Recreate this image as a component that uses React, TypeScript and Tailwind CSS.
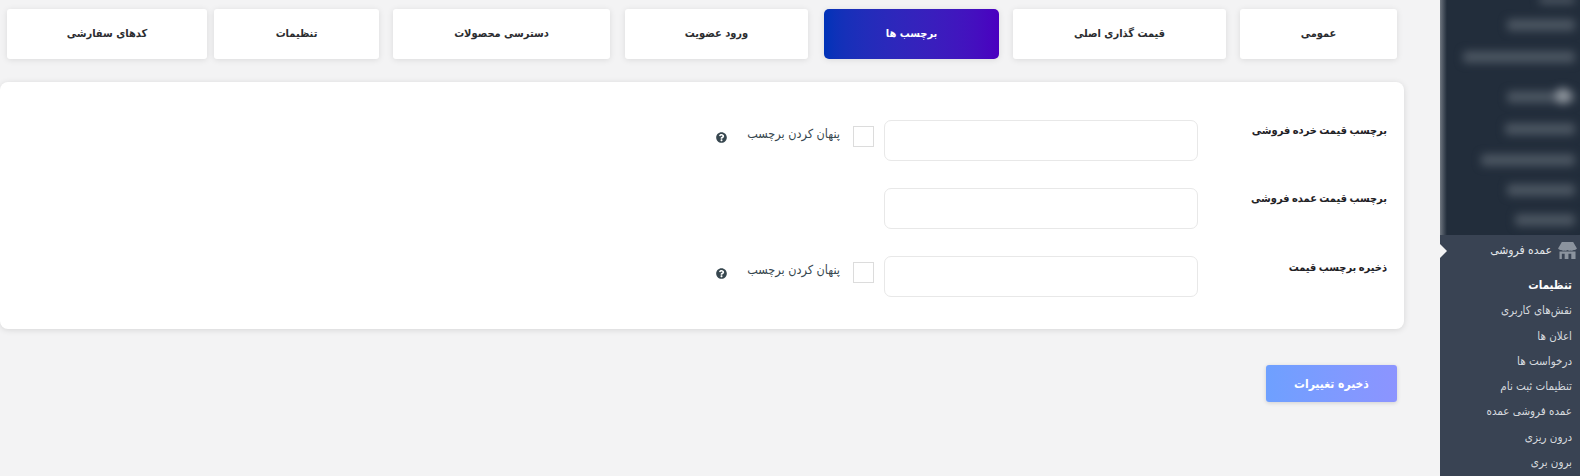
import React from 'react';
import { FaQuestionCircle } from 'react-icons/fa';

const tabs = [
  { label: 'عمومی', className: 'w-[157px] ml-[14px]' },
  { label: 'قیمت گذاری اصلی', className: 'w-[213px] ml-[14px]' },
  { label: 'برچسب ها', className: 'w-[175px] ml-[16px]', active: true },
  { label: 'ورود عضویت', className: 'w-[183px] ml-[15px]' },
  { label: 'دسترسی محصولات', className: 'w-[217px] ml-[14px]' },
  { label: 'تنظیمات', className: 'w-[165px] ml-[7px]' },
  { label: 'کدهای سفارشی', className: 'w-[200px]' },
];

const submenu = [
  { label: 'نقش‌های کاربری' },
  { label: 'اعلان ها' },
  { label: 'درخواست ها' },
  { label: 'تنظیمات ثبت نام' },
  { label: 'عمده فروشی عمده' },
  { label: 'درون ریزی' },
  { label: 'برون بری' },
];

// blurred menu entries at the top of the sidebar
const blurredRows = [
  { className: 'w-[36px] h-[8px] mt-[-4px]' },
  { className: 'w-[68px] h-[12px] mt-[15px]' },
  { className: 'w-[112px] h-[12px] mt-[20px]' },
  { className: 'w-[68px] h-[12px] mt-[28px]', spot: true },
  { className: 'w-[70px] h-[12px] mt-[20px]' },
  { className: 'w-[94px] h-[12px] mt-[19px]' },
  { className: 'w-[68px] h-[12px] mt-[18px]' },
  { className: 'w-[60px] h-[12px] mt-[18px]' },
];

const HideLabel = () => (
  <>
    <span className="mr-[10px] mt-[6px] box-border size-[21px] shrink-0 border border-[#dcdcdc] bg-white" />
    <span className="mr-[13px] mt-[4px] text-[12.500px] leading-[20px] text-[#37474f]">پنهان کردن برچسب</span>
    <FaQuestionCircle className="mr-[20px] mt-[12px] size-[11px] text-[#37474f]" />
  </>
);

const FieldRow = ({ label, hide, labelClass }: { label: string; hide?: boolean; labelClass: string }) => (
  <div className="flex items-start">
    <label className={`w-[189px] shrink-0 text-[11px] font-bold leading-[20px] text-[#1f2226] [word-spacing:-1px] ${labelClass}`}>{label}</label>
    <div className="box-border h-[41px] w-[314px] shrink-0 rounded-[7px] border border-[#e8e8e8] bg-white" />
    {hide && <HideLabel />}
  </div>
);

const Sidebar = () => (
  <aside className="flex h-[476px] w-[140px] shrink-0 flex-col overflow-hidden bg-[#394353] text-[#e4e7ea]">
    <div className="flex h-[235px] shrink-0 flex-row-reverse bg-[#222d3b]">
      <div className="h-full w-[7px] shrink-0 bg-linear-to-r from-[#6f7680] to-[#222d3b]" />
      <div className="flex flex-1 flex-col items-start pr-[5px] blur-[4px]">
        {blurredRows.map((row, i) => (
          <div key={i} className={`rounded-sm bg-[#4b5561] ${row.className}`}>
            {row.spot && <div className="mr-[4px] mt-[-3px] size-[16px] rounded-full bg-[#8b929a]" />}
          </div>
        ))}
      </div>
    </div>
    <div className="relative flex h-[34px] shrink-0 items-center pr-[3px] pb-[4px]">
      <span className="absolute right-[140px] top-[9px] size-0 translate-x-[7px] border-y-[7px] border-r-0 border-l-[7px] border-y-transparent border-l-[#f3f3f4]" />
      <svg viewBox="0 0 20 18" className="ml-[6px] h-[17px] w-[19px] shrink-0 fill-[#8b939e]">
        <path d="M4 0h12l4 7a3 3 0 0 1-3.400 1.400A3.500 3.500 0 0 1 13.300 9 3.500 3.500 0 0 1 10 8.500 3.500 3.500 0 0 1 6.700 9 3.500 3.500 0 0 1 3.400 8.400 3 3 0 0 1 0 7z" />
        <path d="M1.500 10h17v8h-4.500v-5.500h-3V18H1.500zM4 12.500V18h3v-5.500z" fillRule="evenodd" />
      </svg>
      <span className="text-[12px] leading-[20px]">عمده فروشی</span>
    </div>
    <nav className="flex flex-col pt-[4px] pr-[8px] text-[11.500px] leading-[25.300px] text-[#d5d9de]">
      <a className="font-bold text-white">تنظیمات</a>
      {submenu.map((item) => (
        <a key={item.label}>{item.label}</a>
      ))}
    </nav>
  </aside>
);

export default function App() {
  return (
    <div dir="rtl" className="flex h-[476px] w-[1580px] overflow-hidden bg-[#f3f3f4] font-['DejaVu_Sans_Condensed','DejaVu_Sans',sans-serif]">
      <Sidebar />
      <main className="flex w-[1440px] shrink-0 flex-col">
        <div className="flex pt-[9px] pr-[43px]">
          {tabs.map((tab) => (
            <button
              key={tab.label}
              className={`h-[50px] shrink-0 rounded-[3px] text-[11px] font-bold shadow-[0_1px_6px_rgba(0,0,0,0.1)] ${tab.className} ${
                tab.active
                  ? 'rounded-[5px] bg-linear-to-r from-[#0033b8] to-[#4a00c0] text-white'
                  : 'bg-white text-[#2b2d30]'
              }`}
            >
              {tab.label}
            </button>
          ))}
        </div>

        <section className="mt-[23px] mr-[36px] flex h-[247px] w-[1404px] flex-col gap-[27px] rounded-lg bg-white pt-[38px] pr-[17px] shadow-[0_1px_6px_rgba(0,0,0,0.12)]">
          <FieldRow label="برچسب قیمت خرده فروشی" labelClass="mt-[1px]" hide />
          <FieldRow label="برچسب قیمت عمده فروشی" labelClass="mt-[1px]" />
          <FieldRow label="ذخیره برچسب قیمت" labelClass="mt-[2px]" hide />
        </section>

        <div className="mt-[36px] pr-[43px]">
          <button className="h-[37px] w-[131px] rounded-[3px] bg-linear-to-r from-[#6ea0ff] to-[#8c94ff] text-[12px] font-bold text-white shadow-[0_1px_4px_rgba(0,0,0,0.15)]">
            ذخیره تغییرات
          </button>
        </div>
      </main>
    </div>
  );
}
